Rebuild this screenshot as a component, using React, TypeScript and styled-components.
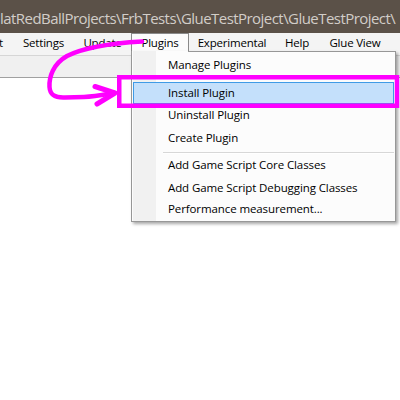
import React from "react";
import styled, { createGlobalStyle, css } from "styled-components";

const GlobalStyle = createGlobalStyle`
  html, body { margin: 0; padding: 0; width: 400px; height: 400px; overflow: hidden; background: #fff; }
  #root { width: 400px; height: 400px; }
`;

const Window = styled.div`
  position: relative;
  width: 400px;
  height: 400px;
  overflow: hidden;
  background: #fff;
  display: flex;
  flex-direction: column;
  font-family: "Open Sans", "Noto Sans", sans-serif;
`;

const TitleBar = styled.div`
  flex: none;
  box-sizing: border-box;
  height: 33px;
  padding-top: 3px;
  background: #5b5148;
  color: #d2cdc8;
  font-size: 15px;
  line-height: 30px;
  letter-spacing: -0.55px;
  white-space: nowrap;
  overflow: hidden;
`;

const MenuBar = styled.div`
  flex: none;
  box-sizing: border-box;
  height: 23px;
  background: #f4f4f4;
  border-bottom: 1px solid #d6d6d6;
  display: flex;
  align-items: flex-start;
`;

const MenuList = styled.div`
  display: flex;
  margin-left: -27px;
`;

const MenuItem = styled.div<{ $open?: boolean; $w: number }>`
  box-sizing: border-box;
  width: ${(p) => p.$w}px;
  height: 20px;
  border: 1px solid transparent;
  border-bottom: none;
  font-size: 11.5px;
  line-height: 17px;
  letter-spacing: -0.2px;
  text-align: center;
  color: #000;
  white-space: nowrap;
  ${(p) =>
    p.$open &&
    css`
      background: #fcfcfc;
      border-color: #8a8a8a;
    `}
`;

const ToolBar = styled.div`
  flex: none;
  box-sizing: border-box;
  height: 22px;
  background: #f0f0f0;
  border-bottom: 1px solid #a0a0a0;
`;

const Content = styled.div`
  flex: 1;
  background: #fff;
`;

const Dropdown = styled.div`
  position: absolute;
  left: 131px;
  top: 51px;
  width: 265px;
  box-sizing: border-box;
  padding: 3px 0 2px;
  border: 1px solid #979797;
  border-top: none;
  background: linear-gradient(to right, #fcfcfc 0 1px, #f1f1f1 1px 24px, #fcfcfc 24px);
  box-shadow: 2px 2px 3px rgba(0, 0, 0, 0.35);
  z-index: 2;
  &::before {
    content: "";
    position: absolute;
    top: 0;
    left: 56px;
    right: -1px;
    height: 1px;
    background: #979797;
  }
`;

const Row = styled.div<{ $gap?: number; $active?: boolean }>`
  margin: ${(p) => p.$gap ?? 0}px 1px 0;
  padding-left: 35px;
  font-size: 11.5px;
  line-height: 21px;
  letter-spacing: -0.1px;
  color: #000;
  white-space: nowrap;
  ${(p) =>
    p.$active &&
    css`
      padding-left: 34px;
      padding-bottom: 1px;
      line-height: 19px;
      background: #c4e0fb;
      border: 1px solid #3f9be6;
    `}
`;

const Separator = styled.div`
  margin: 4px 1px 0 31px;
  height: 0;
  border-top: 1px solid #d7d7d7;
  border-bottom: 1px solid #ffffff;
`;

const Overlay = styled.svg`
  position: absolute;
  left: 0;
  top: 0;
  pointer-events: none;
  z-index: 3;
`;

const menus: { label: string; w: number }[] = [
  { label: "Edit", w: 40 },
  { label: "Settings", w: 61 },
  { label: "Update", w: 57 },
  { label: "Plugins", w: 58 },
  { label: "Experimental", w: 86 },
  { label: "Help", w: 44 },
  { label: "Glue View", w: 72 },
];

export default function App() {
  return (
    <>
      <GlobalStyle />
      <Window>
        <TitleBar>latRedBallProjects\FrbTests\GlueTestProject\GlueTestProject\</TitleBar>
        <MenuBar>
          <MenuList>
            {menus.map((m) => (
              <MenuItem key={m.label} $w={m.w} $open={m.label === "Plugins"}>
                {m.label}
              </MenuItem>
            ))}
          </MenuList>
        </MenuBar>
        <ToolBar />
        <Content />
        <Dropdown>
          <Row>Manage Plugins</Row>
          <Row $gap={7} $active>
            Install Plugin
          </Row>
          <Row>Uninstall Plugin</Row>
          <Row $gap={2}>Create Plugin</Row>
          <Separator />
          <Row>Add Game Script Core Classes</Row>
          <Row $gap={2}>Add Game Script Debugging Classes</Row>
          <Row>Performance measurement...</Row>
        </Dropdown>
        <Overlay width="400" height="400" viewBox="0 0 400 400">
          <g fill="none" stroke="#ff00ff" strokeLinecap="round" strokeLinejoin="round">
            <path
              strokeWidth="4.5"
              d="M142 41.5 C 115 43, 84 47.5, 67 56 C 53 64, 49 77, 49.5 87 C 50 95, 55 98, 65 97.5 L 84 97 C 95 96.5, 105 94.5, 114 93"
            />
            <path strokeWidth="5" d="M95 86.5 L 115 93 L 97 104" />
            <rect x="119.25" y="77.25" width="277.75" height="28.5" strokeWidth="4.5" strokeLinecap="butt" strokeLinejoin="miter" />
          </g>
        </Overlay>
      </Window>
    </>
  );
}
